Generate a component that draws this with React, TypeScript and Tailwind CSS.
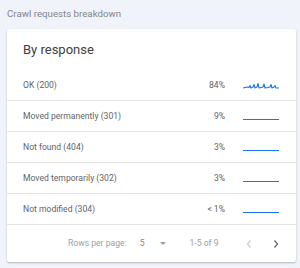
const rows = [
  { label: "OK (200)", pct: "84%", spiky: true },
  { label: "Moved permanently (301)", pct: "9%", spiky: false },
  { label: "Not found (404)", pct: "3%", spiky: false },
  { label: "Moved temporarily (302)", pct: "3%", spiky: false },
  { label: "Not modified (304)", pct: "< 1%", spiky: false },
];

const Sparkline = ({ spiky }: { spiky: boolean }) => {
  // tiny trend line, flat for the low rows
  const points = spiky
    ? "0,7 2,6.5 4,6 6,6.5 7,4.5 8,7 10,6 11,3.5 12,7 14,6 15,2.5 16,7 18,6.5 20,6 21,3 22,7 25,6.5 27,6 28,3.5 29,7 31,6 32,4.5 33,7 36,7"
    : "0,7.5 36,7.5";
  return (
    <svg width="36" height="9" viewBox="0 0 36 9" className="block">
      <polyline
        points={points}
        fill="none"
        stroke="#1a73e8"
        strokeWidth="1.1"
        strokeLinejoin="round"
      />
    </svg>
  );
};

const App = () => {
  return (
    <div
      className="w-[300px] h-[268px] bg-[#f1f3fa] overflow-hidden"
      style={{ fontFamily: "Roboto, 'Liberation Sans', sans-serif" }}
    >
      <p className="pl-[7px] pt-[8px] text-[9.7px] leading-[12px] text-[#80868b]">
        Crawl requests breakdown
      </p>
      <div className="ml-[7px] mt-[9px] w-[289px] h-[233px] bg-white rounded-[2px] shadow-[0_1px_2px_rgba(0,0,0,0.25)] flex flex-col">
        <div className="h-[41px] pl-4 flex items-center">
          <p className="text-[13px] text-[#3c4043]">By response</p>
        </div>
        {rows.map((row) => (
          <div
            key={row.label}
            className="h-[31px] flex items-center border-b border-[#e3e3e3] text-[8.6px] text-[#5f6368]"
          >
            <span className="flex-1 pl-4">{row.label}</span>
            <span className="w-[40px] text-right">{row.pct}</span>
            <span className="ml-[18px] mr-[17px] pt-[1px]">
              <Sparkline spiky={row.spiky} />
            </span>
          </div>
        ))}
        <div className="flex-1 flex items-center text-[8.6px] text-[#9aa0a6]">
          <span className="ml-[61px]">Rows per page:</span>
          <span className="ml-[13px] text-[#80868b]">5</span>
          <span className="ml-[16px] w-0 h-0 border-l-[3.5px] border-r-[3.5px] border-t-[3.5px] border-l-transparent border-r-transparent border-t-[#9aa0a6]" />
          <span className="ml-[23px]">1-5 of 9</span>
          <svg width="8" height="10" viewBox="0 0 8 10" className="ml-[26px]">
            <polyline points="5.5,1.5 2.5,5 5.5,8.5" fill="none" stroke="#c8cbd0" strokeWidth="1.2" />
          </svg>
          <svg width="8" height="10" viewBox="0 0 8 10" className="ml-[19px]">
            <polyline points="2.5,1.5 5.5,5 2.5,8.5" fill="none" stroke="#5f6368" strokeWidth="1.2" />
          </svg>
        </div>
      </div>
    </div>
  );
};

export default App;
